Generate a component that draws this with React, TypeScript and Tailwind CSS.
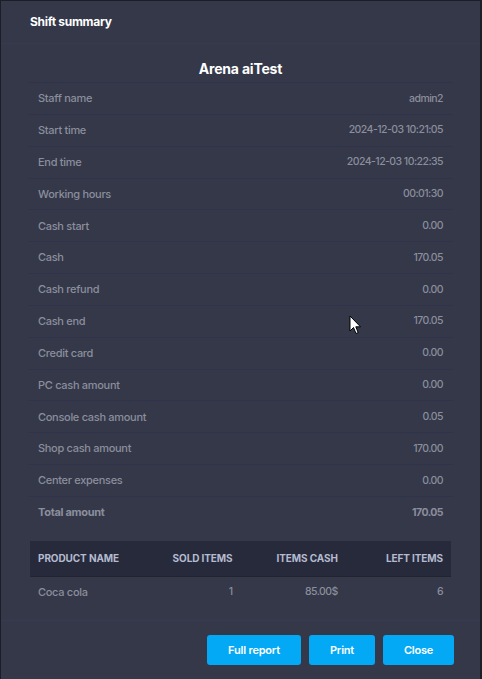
import React from "react";

const rows: [string, string][] = [
  ["Staff name", "admin2"],
  ["Start time", "2024-12-03 10:21:05"],
  ["End time", "2024-12-03 10:22:35"],
  ["Working hours", "00:01:30"],
  ["Cash start", "0.00"],
  ["Cash", "170.05"],
  ["Cash refund", "0.00"],
  ["Cash end", "170.05"],
  ["Credit card", "0.00"],
  ["PC cash amount", "0.00"],
  ["Console cash amount", "0.05"],
  ["Shop cash amount", "170.00"],
  ["Center expenses", "0.00"],
];

export default function App() {
  return (
    <div
      className="relative w-[482px] h-[679px] bg-[#343849] border-l border-t border-r-2 border-[#1b1d27] flex flex-col overflow-hidden"
      style={{ fontFamily: "Inter, 'Open Sans', sans-serif" }}
    >
      <div className="h-[43px] shrink-0 flex items-center pl-[29px] text-[12px] font-bold text-white border-b border-[#373b51] tracking-[-0.3px]">
        Shift summary
      </div>
      <div className="flex-1 px-[27px]">
        <div className="pt-[15px] h-[38px] text-center text-[14px] leading-[20px] font-bold text-white tracking-[-0.2px]">
          Arena aiTest
        </div>
        <div>
          {rows.map(([k, v]) => (
            <div
              key={k}
              className="h-[31.85px] border-t border-[#30334b] flex items-center justify-between px-[10px] text-[#8b8e9c] font-medium"
            >
              <span className="text-[11px] tracking-[-0.3px]">{k}</span>
              <span className="text-[10.5px] tracking-[-0.55px]">{v}</span>
            </div>
          ))}
          <div className="h-[31.85px] border-t border-[#30334b] flex items-center justify-between px-[10px] text-[#8b8e9c] font-bold">
            <span className="text-[11px] tracking-[-0.3px]">Total amount</span>
            <span className="text-[10.5px] tracking-[-0.55px]">170.05</span>
          </div>
        </div>
        <div className="mt-[13px] mx-[2px]">
          <div className="grid grid-cols-4 h-[36px] items-center bg-[#272a3b] border-b border-[#22242f] text-[10px] font-bold text-[#b4bbd0] tracking-[-0.1px]">
            <div className="px-[8px]">PRODUCT NAME</div>
            <div className="px-[8px] text-right">SOLD ITEMS</div>
            <div className="px-[8px] text-right">ITEMS CASH</div>
            <div className="px-[8px] text-right">LEFT ITEMS</div>
          </div>
          <div className="grid grid-cols-4 h-[30px] items-center text-[#8b8e9c] font-medium">
            <div className="px-[8px] text-[11px] tracking-[-0.3px]">Coca cola</div>
            <div className="px-[8px] text-right text-[10.5px] tracking-[-0.55px]">1</div>
            <div className="px-[8px] text-right text-[10.5px] tracking-[-0.55px]">85.00$</div>
            <div className="px-[8px] text-right text-[10.5px] tracking-[-0.55px]">6</div>
          </div>
        </div>
      </div>
      <div className="h-[59px] shrink-0 border-t border-[#373b51] flex items-start justify-end gap-[8px] pt-[14px] pr-[26px]">
        <button className="w-[94px] h-[30px] rounded-[3px] bg-[#03a9f4] text-white text-[11px] font-semibold tracking-[-0.2px]">
          Full report
        </button>
        <button className="w-[66px] h-[30px] rounded-[3px] bg-[#03a9f4] text-white text-[11px] font-semibold tracking-[-0.2px]">
          Print
        </button>
        <button className="w-[71px] h-[30px] rounded-[3px] bg-[#03a9f4] text-white text-[11px] font-semibold tracking-[-0.2px]">
          Close
        </button>
      </div>
      <svg
        className="absolute left-[348px] top-[314px]"
        width="13"
        height="20"
        viewBox="0 0 13 20"
      >
        <path
          d="M1 1 L1 16 L4.5 12.5 L7 18.5 L9.2 17.6 L6.8 11.8 L11.5 11.8 Z"
          fill="white"
          stroke="black"
          strokeWidth="1"
          strokeLinejoin="round"
        />
      </svg>
    </div>
  );
}
